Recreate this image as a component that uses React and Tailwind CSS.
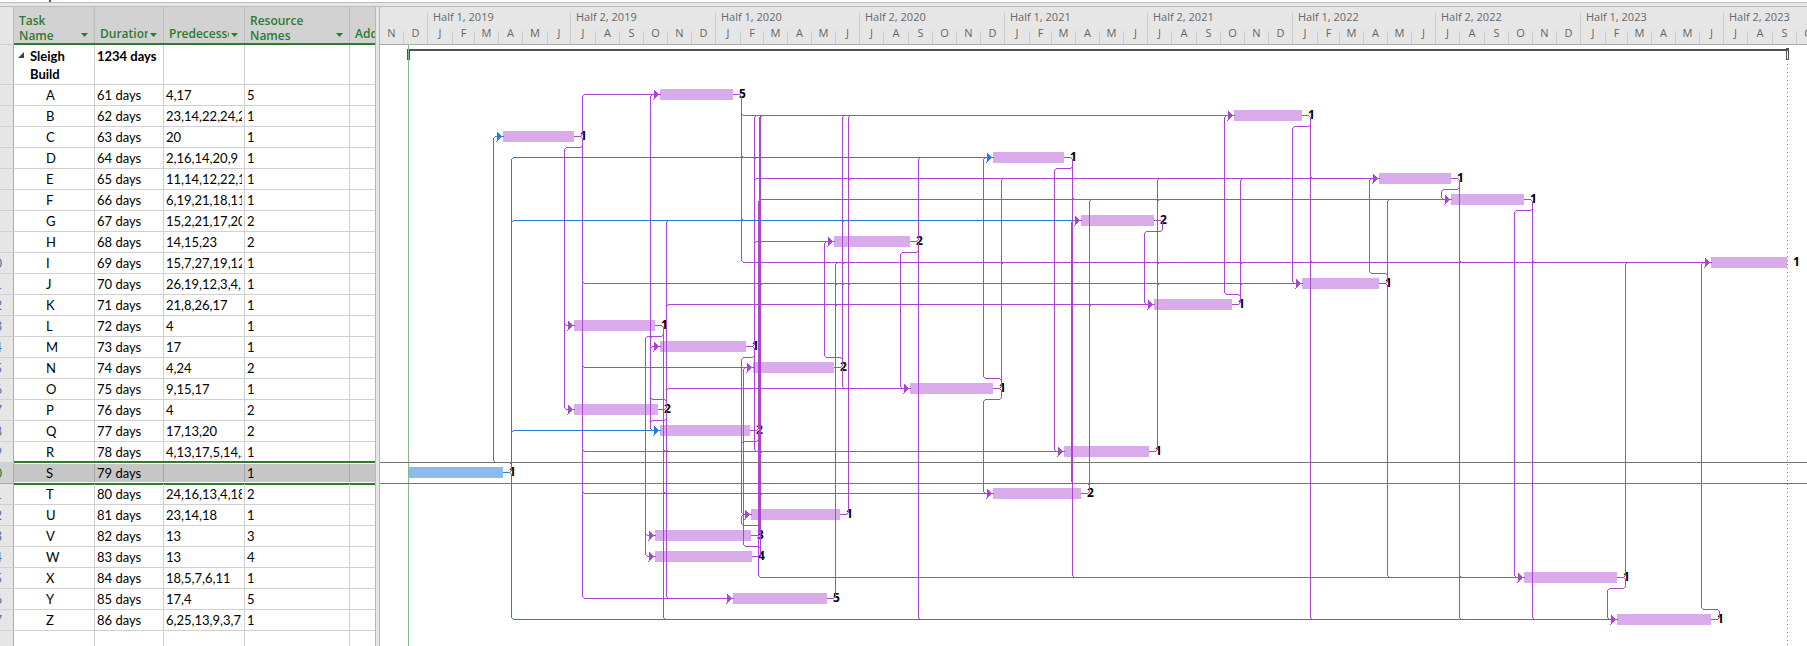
const SUMMARY = { name: "Sleigh Build", duration: "1234 days" };

// name, days, predecessor text, resources, bar start, bar end, predecessor ids
const TASKS = [
  ["A", 61, "4,17", 5, 660, 733, [4, 17]],
  ["B", 62, "23,14,22,24,2,15,12", 1, 1234, 1302, [23, 14, 22, 24, 2, 15, 12]],
  ["C", 63, "20", 1, 503, 574, [20]],
  ["D", 64, "2,16,14,20,9", 1, 993, 1064, [2, 16, 14, 20, 9]],
  ["E", 65, "11,14,12,22,16,19,3", 1, 1379, 1451, [11, 14, 12, 22, 16, 19, 3]],
  ["F", 66, "6,19,21,18,11,5", 1, 1451, 1524, [6, 19, 21, 18, 11, 5]],
  ["G", 67, "15,2,21,17,20", 2, 1081, 1154, [15, 2, 21, 17, 20]],
  ["H", 68, "14,15,23", 2, 834, 910, [14, 15, 23]],
  ["I", 69, "15,7,27,19,12,2,6,3", 1, 1711, 1787, [15, 7, 27, 19, 12, 2, 6, 3, 26, 16, 25]],
  ["J", 70, "26,19,12,3,4,15,22", 1, 1302, 1379, [26, 19, 12, 3, 4, 15, 22, 24]],
  ["K", 71, "21,8,26,17", 1, 1154, 1232, [21, 8, 26, 17]],
  ["L", 72, "4", 1, 574, 655, [4]],
  ["M", 73, "17", 1, 660, 746, [17]],
  ["N", 74, "4,24", 2, 753, 834, [4, 24]],
  ["O", 75, "9,15,17", 1, 910, 993, [9, 15, 17]],
  ["P", 76, "4", 2, 574, 658, [4]],
  ["Q", 77, "17,13,20", 2, 660, 750, [17, 13, 20]],
  ["R", 78, "4,13,17,5,14,24", 1, 1064, 1149, [4, 13, 17, 5, 14, 24]],
  ["S", 79, "", 1, 409, 503, []],
  ["T", 80, "24,16,13,4,18", 2, 993, 1081, [24, 16, 13, 4, 18]],
  ["U", 81, "23,14,18", 1, 751, 840, [23, 14, 18]],
  ["V", 82, "13", 3, 655, 751, [13]],
  ["W", 83, "13", 4, 655, 752, [13]],
  ["X", 84, "18,5,7,6,11", 1, 1524, 1617, [18, 5, 7, 6, 11]],
  ["Y", 85, "17,4", 5, 733, 827, [17, 4]],
  ["Z", 86, "6,25,13,9,3,7,20", 1, 1617, 1711, [6, 25, 13, 9, 3, 7, 20]],
].map(([name, days, preds, res, start, end, from], i) => ({
  id: i + 2,
  name,
  days,
  preds,
  res,
  start,
  end,
  from,
  y: 94 + 21 * i,
}));

const SELECTED = "S";

const HALVES = [
  { label: "", months: [["N", 23], ["D", 24]] },
  { label: "Half 1, 2019", months: [["J", 25], ["F", 22], ["M", 24], ["A", 24], ["M", 25], ["J", 23]] },
  { label: "Half 2, 2019", months: [["J", 25], ["A", 24], ["S", 24], ["O", 24], ["N", 24], ["D", 24]] },
  { label: "Half 1, 2020", months: [["J", 25], ["F", 23], ["M", 24], ["A", 24], ["M", 24], ["J", 24]] },
  { label: "Half 2, 2020", months: [["J", 24], ["A", 25], ["S", 24], ["O", 24], ["N", 24], ["D", 24]] },
  { label: "Half 1, 2021", months: [["J", 25], ["F", 22], ["M", 24], ["A", 24], ["M", 24], ["J", 24]] },
  { label: "Half 2, 2021", months: [["J", 24], ["A", 25], ["S", 24], ["O", 24], ["N", 24], ["D", 24]] },
  { label: "Half 1, 2022", months: [["J", 25], ["F", 22], ["M", 24], ["A", 24], ["M", 24], ["J", 24]] },
  { label: "Half 2, 2022", months: [["J", 24], ["A", 25], ["S", 24], ["O", 24], ["N", 24], ["D", 24]] },
  { label: "Half 1, 2023", months: [["J", 25], ["F", 22], ["M", 24], ["A", 24], ["M", 24], ["J", 24]] },
  { label: "Half 2, 2023", months: [["J", 24], ["A", 25], ["S", 24], ["O", 24], ["N", 24], ["D", 24]] },
];

const PURPLE = "#ac44d2";
const BLUE = "#2b7cd3";

// Turns a list of right-angled points into a path with small cut corners.
function route(points) {
  let d = `M${points[0][0]} ${points[0][1]}`;
  for (let i = 1; i < points.length - 1; i++) {
    const [px, py] = points[i - 1];
    const [x, y] = points[i];
    const [nx, ny] = points[i + 1];
    const r = 2;
    d += `L${x - Math.sign(x - px) * r} ${y - Math.sign(y - py) * r}`;
    d += `L${x + Math.sign(nx - x) * r} ${y + Math.sign(ny - y) * r}`;
  }
  const last = points[points.length - 1];
  return `${d}L${last[0]} ${last[1]}`;
}

function linkPath(from, to) {
  const out = from.end + 8;
  if (out < to.start - 10) {
    return route([[from.end - 1, from.y], [out, from.y], [out, to.y], [to.start, to.y]]);
  }
  const lane = to.y > from.y ? from.y + 11 : from.y - 10;
  const into = to.start - 10;
  return route([
    [from.end - 1, from.y],
    [out, from.y],
    [out, lane],
    [into, lane],
    [into, to.y],
    [to.start, to.y],
  ]);
}

const LINKS = TASKS.flatMap((to) =>
  to.from.map((id) => ({ from: TASKS[id - 2], to }))
).sort((a, b) => a.from.id - b.from.id || a.to.id - b.to.id);

function FilterButton({ label }) {
  return (
    <button type="button" aria-label={`Filter ${label}`} className="mb-[6px] shrink-0">
      <svg width="7" height="4" viewBox="0 0 7 4" className="block">
        <path d="M0 0h7L3.500 4z" fill="#2e7a2e" />
      </svg>
    </button>
  );
}

function HeaderCell({ label, lines }) {
  return (
    <th scope="col" className="h-[38px] border-b-2 border-[#2e7a2e] bg-[#d2d2d2] p-0 align-bottom font-semibold">
      <div className="flex h-9 items-end justify-between border-r border-[#bcbcbc] pr-[6px] pl-[5px]">
        <div className={lines ? "leading-[15px]" : "mr-[2px] overflow-hidden pb-[2px] leading-[15px] whitespace-nowrap"}>
          {lines ? lines.map((l) => <div key={l}>{l}</div>) : label}
        </div>
        <FilterButton label={label} />
      </div>
    </th>
  );
}

const CELL = "overflow-hidden border-r border-b border-[#d0d0d0] p-0 whitespace-nowrap";
const CELL_SELECTED = "overflow-hidden border-r border-b border-r-[#a6a6a6] border-b-white bg-[#c6c6c6] p-0 whitespace-nowrap";

function TaskRow({ task }) {
  const selected = task.name === SELECTED;
  const cell = selected ? CELL_SELECTED : CELL;
  return (
    <tr className="relative h-[21px]">
      <th
        scope="row"
        className={
          selected
            ? "overflow-hidden border-r border-b border-[#ababab] bg-[#d2d2d2] p-0 font-normal text-[#2e7a2e]"
            : "overflow-hidden border-r border-b border-r-[#ababab] border-b-[#d0d0d0] bg-[#e6e6e6] p-0 font-normal text-[#5f6f96]"
        }
      >
        <div className="flex h-5 items-center justify-end pr-[11px] leading-5">{task.id > 9 ? task.id : null}</div>
      </th>
      <td className={cell}>
        <div className="pl-8 leading-5">{task.name}</div>
        {selected && (
          <div className="pointer-events-none absolute -top-[2px] right-0 -bottom-px left-[14px] border-y-2 border-[#2e7a2e]">
            <div className="h-full border-y border-white" />
          </div>
        )}
      </td>
      <td className={cell}>
        <div className="pl-[2px] leading-5">{task.days} days</div>
      </td>
      <td className={cell}>
        <div className="mr-[2px] h-5 overflow-hidden pl-[2px] leading-5">{task.preds}</div>
      </td>
      <td className={cell}>
        <div className="pl-[2px] leading-5">{task.res}</div>
      </td>
      <td className={selected ? "border-b border-white bg-[#c6c6c6]" : "border-b border-[#d0d0d0]"} />
    </tr>
  );
}

function TaskTable() {
  return (
    <table className="w-[375px] shrink-0 table-fixed border-separate border-spacing-0 self-start text-left font-[Lato,sans-serif] text-[13px] text-black">
      <colgroup>
        <col className="w-[14px]" />
        <col className="w-[81px]" />
        <col className="w-[69px]" />
        <col className="w-[81px]" />
        <col className="w-[105px]" />
        <col className="w-[25px]" />
      </colgroup>
      <thead className="font-['Open_Sans',sans-serif] text-xs text-[#2e7a2e]">
        <tr>
          <td className="border-r border-b border-r-[#bcbcbc] border-b-[#d0d0d0] bg-[#e6e6e6]" />
          <HeaderCell label="Task Name" lines={["Task", "Name"]} />
          <HeaderCell label="Duration" />
          <HeaderCell label="Predecessors" />
          <HeaderCell label="Resource Names" lines={["Resource", "Names"]} />
          <th scope="col" className="overflow-hidden border-b-2 border-[#2e7a2e] bg-[#d2d2d2] p-0 align-bottom font-semibold">
            <div className="overflow-hidden pb-[2px] pl-[5px] leading-[15px] whitespace-nowrap">Add</div>
          </th>
        </tr>
      </thead>
      <tbody>
        <tr className="h-10 align-top font-bold">
          <td className="border-r border-b border-r-[#ababab] border-b-[#d0d0d0] bg-[#e6e6e6]" />
          <td className={CELL}>
            <div className="flex items-start pt-[2px] pl-1">
              <button type="button" aria-label="Collapse Sleigh Build" className="mt-[5px] mr-[6px] shrink-0">
                <svg width="6" height="6" viewBox="0 0 6 6" className="block">
                  <path d="M6 0v6H0z" fill="#444" />
                </svg>
              </button>
              <div className="leading-[18px] whitespace-normal">{SUMMARY.name}</div>
            </div>
          </td>
          <td className={CELL}>
            <div className="pt-[2px] pl-[2px] leading-[18px]">{SUMMARY.duration}</div>
          </td>
          <td className={CELL} />
          <td className={CELL} />
          <td className="border-b border-[#d0d0d0]" />
        </tr>
        {TASKS.map((t) => (
          <TaskRow key={t.id} task={t} />
        ))}
        <tr className="h-[21px]">
          <td className="border-r border-b border-r-[#ababab] border-b-[#d0d0d0] bg-[#e6e6e6]" />
          <td className={CELL} />
          <td className={CELL} />
          <td className={CELL} />
          <td className={CELL} />
          <td className="border-b border-[#d0d0d0]" />
        </tr>
      </tbody>
    </table>
  );
}

function Timescale() {
  return (
    <div className="flex h-[38px] shrink-0 overflow-hidden border-b border-[#ababab] bg-[#e6e6e6] pt-[6px] font-['Open_Sans',sans-serif] text-[11px] text-[#666]">
      {HALVES.map((half, h) => (
        <div
          key={h}
          className={h ? "flex shrink-0 flex-col justify-between border-l border-[#cbcbcb]" : "flex shrink-0 flex-col justify-end"}
        >
          {half.label && <div className="pl-[5px] leading-[7px] whitespace-nowrap">{half.label}</div>}
          <div className="flex">
            {half.months.map(([letter, width], m) => (
              <div
                key={m}
                className={m ? "h-[13px] shrink-0 border-l border-[#cbcbcb] text-center leading-[3px]" : "h-[13px] shrink-0 text-center leading-[3px]"}
                style={{ width: h && !m ? width - 1 : width }}
              >
                {letter}
              </div>
            ))}
          </div>
        </div>
      ))}
    </div>
  );
}

function Chart() {
  return (
    <svg width="1427" height="606" viewBox="380 45 1427 606" className="block shrink-0" role="img" aria-label="Gantt chart">
      <g shapeRendering="crispEdges">
        <rect x="407" y="49" width="1382" height="2" fill="#505254" />
        <rect x="407" y="49" width="3" height="11" fill="#505254" />
        <rect x="1786" y="48" width="3" height="12" fill="#505254" />
        <rect x="1787" y="51" width="1" height="8" fill="#fff" />
        <path d="M1787.500 64V651" stroke="#808080" strokeDasharray="1 3" />
        <path d="M408.500 45V651" stroke="#84bd84" />
        {TASKS.map((t) => (
          <rect
            key={t.id}
            x={t.start}
            y={t.y - 5}
            width={t.end - t.start}
            height="11"
            fill={t.name === SELECTED ? "#8abbed" : "#d9abea"}
          />
        ))}
      </g>
      <g fontFamily="'Open Sans', sans-serif" fontSize="12" fontWeight="700" fill="#000">
        {TASKS.map((t) => (
          <text key={t.id} x={t.end + 6} y={t.y + 4}>
            {t.res}
          </text>
        ))}
      </g>
      <g transform="translate(0.5 0.5)" shapeRendering="crispEdges">
        {LINKS.map(({ from, to }) => {
          const color = from.name === SELECTED ? BLUE : PURPLE;
          return (
            <g key={`${from.id}-${to.id}`}>
              <path d={linkPath(from, to)} fill="none" stroke={color} />
              <path d={`M${to.start - 7} ${to.y - 5}l6 5l-6 5z`} fill={color} />
            </g>
          );
        })}
      </g>
      <path d="M380 462.500H1807M380 483.500H1807" stroke="#747474" shapeRendering="crispEdges" />
    </svg>
  );
}

export default function App() {
  return (
    <div className="flex h-screen flex-col overflow-hidden bg-white">
      <div className="flex h-[2px] shrink-0 pl-[49px]">
        <div className="w-[2px] bg-[#2e7a2e]" />
      </div>
      <div className="h-[5px] shrink-0 border-y border-[#bcbcbc] bg-[#e6e6e6]" />
      <main className="flex min-h-0 flex-1">
        <TaskTable />
        <div className="w-[5px] shrink-0 border-x border-[#b6b6b6] bg-[#e6e6e6]" />
        <section className="flex min-w-0 flex-1 flex-col overflow-hidden">
          <Timescale />
          <Chart />
        </section>
      </main>
    </div>
  );
}
